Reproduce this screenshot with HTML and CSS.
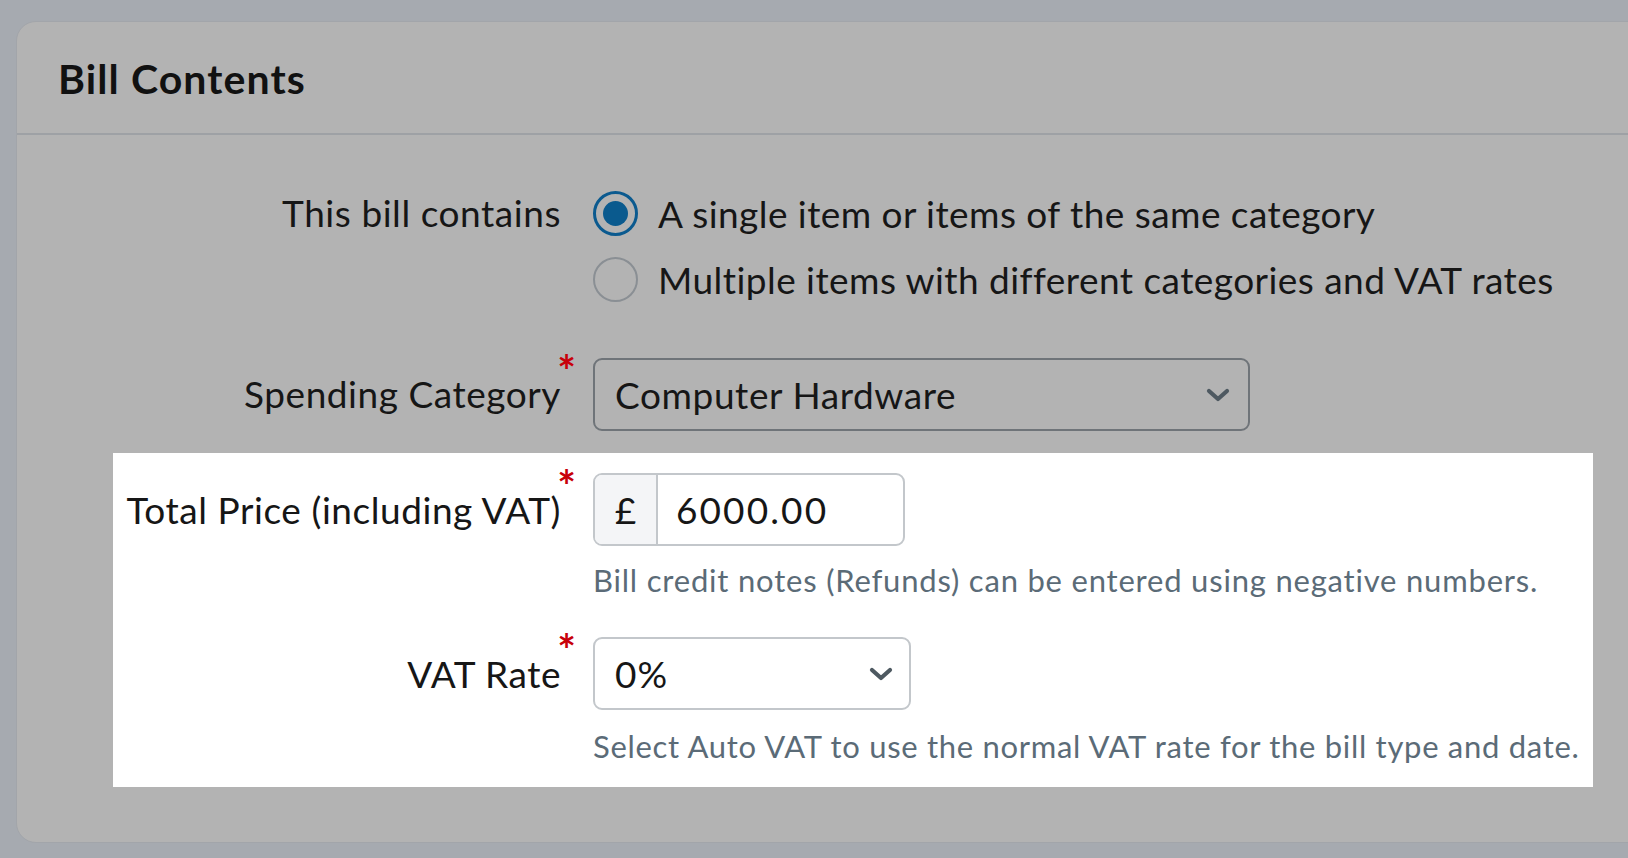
FILE: index.html
```html
<!DOCTYPE html>
<html>
<head>
<meta charset="utf-8">
<link rel="stylesheet" href="styles.css">
</head>
<body>
<div class="card">
  <div class="card-header"><h2>Bill Contents</h2></div>
  <div class="card-body">
    <div class="row row-radio">
      <div class="label">This bill contains</div>
      <div class="control">
        <label class="radio-line"><span class="radio checked"></span><span>A single item or items of the same category</span></label>
        <label class="radio-line"><span class="radio"></span><span>Multiple items with different categories and VAT rates</span></label>
      </div>
    </div>
    <div class="row row-cat">
      <div class="label">Spending Category<span class="req">*</span></div>
      <div class="control">
        <div class="select select-wide"><span>Computer Hardware</span>
          <svg class="chev" viewBox="0 0 24 14" width="24" height="14"><path d="M3 3 L12 11 L21 3" fill="none" stroke="#4e5961" stroke-width="4.2" stroke-linecap="round" stroke-linejoin="round"/></svg>
        </div>
      </div>
    </div>
    <div class="highlight">
      <div class="row row-price">
        <div class="label">Total Price (including VAT)<span class="req">*</span></div>
        <div class="control">
          <div class="input-group"><span class="addon">£</span><span class="value">6000.00</span></div>
          <div class="help">Bill credit notes (Refunds) can be entered using negative numbers.</div>
        </div>
      </div>
      <div class="row row-vat">
        <div class="label">VAT Rate<span class="req">*</span></div>
        <div class="control">
          <div class="select select-vat"><span>0%</span>
            <svg class="chev" viewBox="0 0 24 14" width="24" height="14"><path d="M3 3 L12 11 L21 3" fill="none" stroke="#4e5961" stroke-width="4.2" stroke-linecap="round" stroke-linejoin="round"/></svg>
          </div>
          <div class="help">Select Auto VAT to use the normal VAT rate for the bill type and date.</div>
        </div>
      </div>
    </div>
  </div>
</div>
</body>
</html>
```

FILE: styles.css
```css
html, body {
  margin: 0;
  padding: 0;
}
body {
  width: 1628px;
  height: 858px;
  overflow: hidden;
  background: #a6aab0;
  font-family: "Lato", "Liberation Sans", sans-serif;
  color: #161616;
}
.card {
  margin: 21px 0 0 16px;
  width: 1640px;
  height: 822px;
  background: #b3b3b3;
  border: 1px solid #a2a5aa;
  border-radius: 20px;
  box-sizing: border-box;
}
.card-header {
  height: 113px;
  border-bottom: 2px solid #9ea1a5;
  display: flex;
  align-items: center;
  padding-left: 41px;
  box-sizing: border-box;
}
.card-header h2 {
  margin: 0;
  font-size: 41px;
  font-weight: 700;
  letter-spacing: 1.1px;
  color: #111;
  margin-top: 2px;
}
.card-body {
  padding-top: 45px;
}
.row {
  display: grid;
  grid-template-columns: 560px 1fr;
  column-gap: 0;
}
.label {
  text-align: right;
  font-size: 37px;
  letter-spacing: 0.55px;
  padding-right: 16px;
  box-sizing: border-box;
  position: relative;
  white-space: nowrap;
}
.req {
  position: absolute;
  color: #c8000a;
  font-size: 44px;
  font-weight: 700;
  right: 1px;
  top: -14px;
  letter-spacing: 0;
}
.control {
  padding-left: 16px;
}
.row-radio .label {
  padding-top: 10px;
}
.radio-line {
  display: flex;
  align-items: center;
  gap: 20px;
  height: 66px;
  font-size: 37px;
  letter-spacing: 0.45px;
  white-space: nowrap;
}
.radio {
  width: 45px;
  height: 45px;
  border-radius: 50%;
  border: 2.5px solid #8a8f94;
  box-sizing: border-box;
  flex: none;
  position: relative;
}
.radio.checked {
  border: 3px solid #0b5a8f;
}
.radio.checked::after {
  content: "";
  position: absolute;
  left: 7px;
  top: 7px;
  width: 25px;
  height: 25px;
  border-radius: 50%;
  background: #0a5a8e;
}
.row-cat {
  margin-top: 46px;
}
.row-cat .label {
  padding-top: 13px;
}
.select {
  display: flex;
  align-items: center;
  justify-content: space-between;
  height: 73px;
  box-sizing: border-box;
  border-radius: 9px;
  font-size: 37px;
  letter-spacing: 0.6px;
  padding: 0 18px 0 20px;
}
.select-wide {
  width: 657px;
  border: 2px solid #6f7479;
  background: #b3b3b3;
}
.select-vat {
  width: 318px;
  border: 2px solid #c3c7cb;
  background: #fff;
  padding-right: 16px;
  letter-spacing: 1px;
}
.chev {
  display: block;
}
.highlight {
  margin-top: 22px;
  margin-left: 96px;
  width: 1480px;
  height: 334px;
  background: #fff;
  padding-top: 20px;
  box-sizing: border-box;
}
.highlight .row {
  grid-template-columns: 464px 1fr;
}
.highlight .label {
  padding-top: 14px;
}
.input-group {
  display: flex;
  width: 312px;
  height: 73px;
  border: 2px solid #c3c7cb;
  border-radius: 9px;
  box-sizing: border-box;
  overflow: hidden;
  font-size: 37px;
}
.addon {
  width: 61px;
  flex: none;
  background: #f4f5f7;
  border-right: 2px solid #c3c7cb;
  display: flex;
  align-items: center;
  justify-content: center;
}
.value {
  display: flex;
  align-items: center;
  padding-left: 18px;
  letter-spacing: 2.1px;
}
.help {
  font-size: 31px;
  letter-spacing: 0.8px;
  color: #5b6b77;
  margin-top: 15px;
  white-space: nowrap;
}
.row-vat {
  margin-top: 38px;
}
.row-vat .help {
  margin-top: 17px;
  letter-spacing: 0.7px;
}
```
